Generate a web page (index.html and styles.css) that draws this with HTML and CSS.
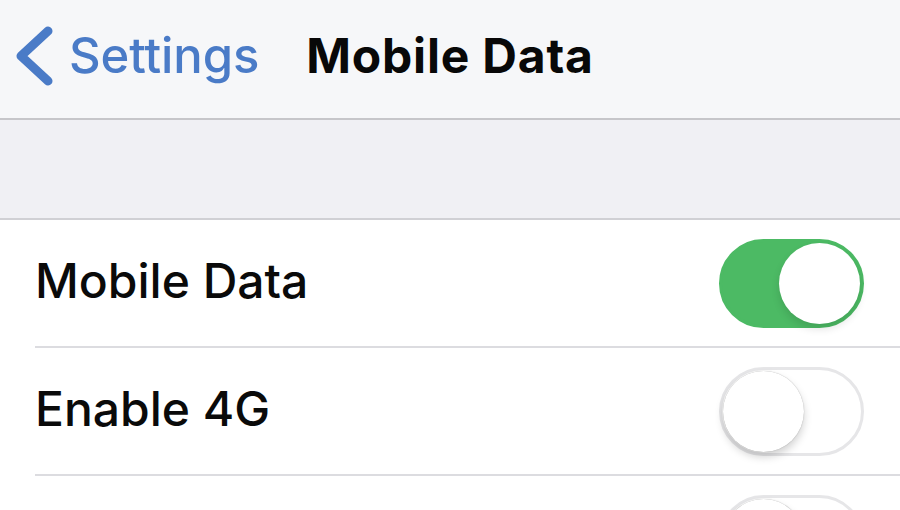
FILE: index.html
```html
<!DOCTYPE html>
<html lang="en">
<head>
  <meta charset="UTF-8">
  <meta name="viewport" content="width=device-width, initial-scale=1.0">
  <title>Mobile Data</title>
  <link rel="stylesheet" href="styles.css">
</head>
<body>
  <div class="screen">
    <div class="navbar">
      <a class="back" href="#">
        <svg class="chevron" width="44" height="62" viewBox="0 0 44 62">
          <path d="M36 6 L9 31 L36 56" fill="none" stroke="#4a7bc7" stroke-width="9" stroke-linecap="round" stroke-linejoin="round"/>
        </svg>
        <span class="back-label">Settings</span>
      </a>
      <div class="nav-title">Mobile Data</div>
    </div>
    <div class="section-gap"></div>
    <div class="group">
      <div class="row">
        <span class="row-label">Mobile Data</span>
        <span class="switch on"><span class="knob"></span></span>
      </div>
      <div class="row">
        <span class="row-label">Enable 4G</span>
        <span class="switch"><span class="knob"></span></span>
      </div>
      <div class="row">
        <span class="row-label"></span>
        <span class="switch"><span class="knob"></span></span>
      </div>
    </div>
  </div>
</body>
</html>
```

FILE: styles.css
```css
body {
  margin: 0;
  font-family: 'Inter', 'Roboto', sans-serif;
  background: #ffffff;
  color: #0a0a0a;
}
.screen {
  width: 900px;
  height: 510px;
  overflow: hidden;
  display: flex;
  flex-direction: column;
}
.navbar {
  position: relative;
  height: 118px;
  flex-shrink: 0;
  background: #f6f7f9;
  border-bottom: 2px solid #c6c6ca;
  display: flex;
  align-items: center;
  justify-content: center;
}
.back {
  position: absolute;
  left: 12px;
  top: 0;
  height: 118px;
  display: flex;
  align-items: center;
  gap: 13px;
  color: #4a7bc7;
  text-decoration: none;
}
.chevron {
  margin-top: -6px;
}
.back-label {
  font-size: 49px;
  font-weight: 500;
  letter-spacing: -0.1px;
  margin-top: -8px;
}
.nav-title {
  font-size: 48px;
  font-weight: 700;
  letter-spacing: 0.8px;
  margin-top: -8px;
  color: #080808;
}
.section-gap {
  height: 98px;
  flex-shrink: 0;
  background: #f0f0f4;
  border-bottom: 2px solid #d0d0d4;
}
.group {
  background: #ffffff;
  padding-left: 35px;
}
.row {
  height: 126px;
  display: flex;
  align-items: center;
  justify-content: space-between;
  padding-right: 36px;
  border-bottom: 2px solid #dcdce0;
}
.row-label {
  font-size: 48px;
  font-weight: 500;
  letter-spacing: 0;
  margin-top: -6px;
}
.switch {
  position: relative;
  width: 145px;
  height: 89px;
  box-sizing: border-box;
  border-radius: 45px;
  border: 3px solid #e6e6e8;
  background: #ffffff;
}
.switch.on {
  background: #4cba64;
  border-color: #4cba64;
}
.knob {
  position: absolute;
  top: 1px;
  left: 1px;
  width: 81px;
  height: 81px;
  border-radius: 50%;
  background: #ffffff;
  box-shadow: 0 5px 8px rgba(0, 0, 0, 0.18), 0 0 1px rgba(0, 0, 0, 0.35);
}
.switch.on .knob {
  left: auto;
  right: 1px;
  box-shadow: 0 5px 8px rgba(0, 0, 0, 0.12);
}
```
